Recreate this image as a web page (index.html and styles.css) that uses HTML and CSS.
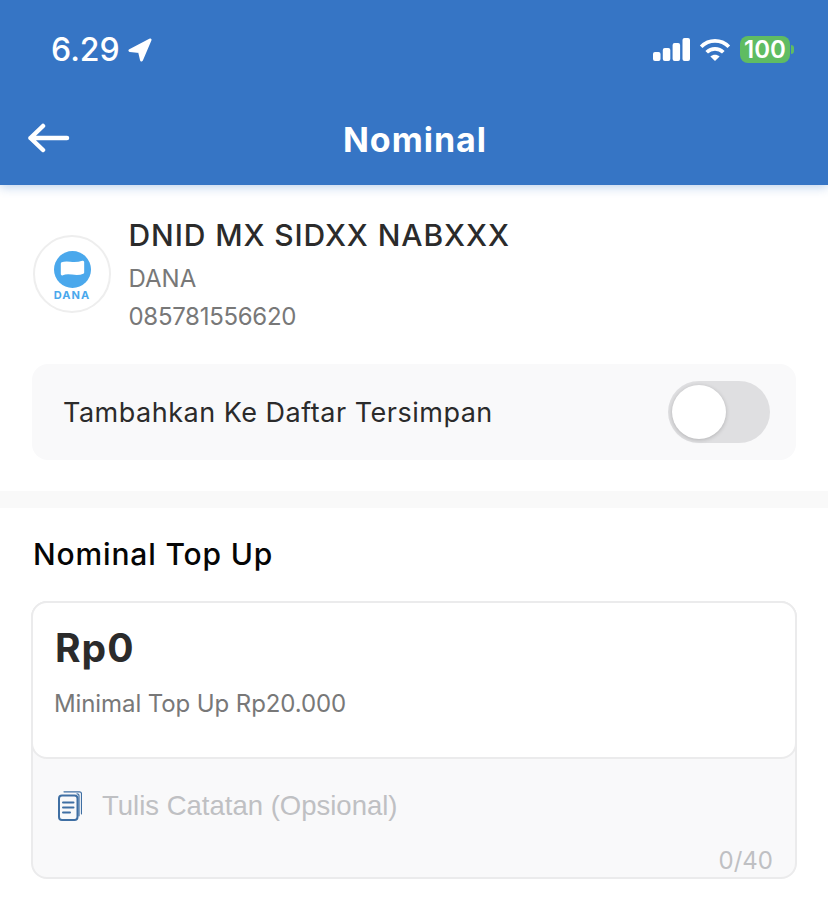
FILE: index.html
```html
<!DOCTYPE html>
<html lang="en">
<head>
  <meta charset="UTF-8" />
  <meta name="viewport" content="width=device-width, initial-scale=1.0"/>
  <title>Nominal</title>
  <link rel="stylesheet" href="styles.css">
</head>
<body>
  <header class="header">
    <div class="status">
      <div class="status-left">
        <span class="time">6.29</span>
        <svg width="24" height="24" viewBox="0 0 24 24"><path d="M22 2 2 12.500 11.500 13.500 13.500 22z" fill="#fff" stroke="#fff" stroke-width="3" stroke-linejoin="round"/></svg>
      </div>
      <div class="status-right">
        <svg width="37" height="23" viewBox="0 0 37 23"><g fill="#fff"><rect x="0" y="14" width="7.500" height="9" rx="2"/><rect x="9.800" y="10" width="7.500" height="13" rx="2"/><rect x="19.600" y="5" width="7.500" height="18" rx="2"/><rect x="29.500" y="0" width="7.500" height="23" rx="2"/></g></svg>
        <svg width="32" height="24" viewBox="0 0 34 26"><g fill="none" stroke="#fff" stroke-width="4"><path d="M2 9.500C10.500 1 23.500 1 32 9.500"/><path d="M8 15.500c5-5 13-5 18 0"/></g><path d="M17 25l-5-5c3-2.500 7-2.500 10 0z" fill="#fff"/></svg>
        <div class="battery"><span class="battery-level">100</span><span class="battery-tip"></span></div>
      </div>
    </div>
    <div class="appbar">
      <svg class="back" width="44" height="34" viewBox="0 0 44 34"><path d="M2.500 17h36.500M15 5 2.500 17 15 29" fill="none" stroke="#fff" stroke-width="4.500" stroke-linecap="round" stroke-linejoin="round"/></svg>
      <h1>Nominal</h1>
    </div>
  </header>

  <section class="account">
    <div class="contact">
      <div class="logo">
        <svg width="37" height="37" viewBox="0 0 38 38"><circle cx="19" cy="19" r="19" fill="#4aa8ec"/><path d="M8.500 13c6-2.500 10.500 2 21-1.500v10.500c-8 3.500-13.500-2-21 1.500z" fill="#fff" stroke="#fff" stroke-width="3" stroke-linejoin="round"/></svg>
        <span class="logo-text">DANA</span>
      </div>
      <div class="contact-info">
        <div class="contact-name">DNID MX SIDXX NABXXX</div>
        <div class="contact-sub">DANA</div>
        <div class="contact-sub contact-phone">085781556620</div>
      </div>
    </div>
    <div class="save-row">
      <span>Tambahkan Ke Daftar Tersimpan</span>
      <div class="toggle"><div class="knob"></div></div>
    </div>
  </section>

  <div class="divider"></div>

  <section class="topup">
    <h2>Nominal Top Up</h2>
    <div class="amount-box">
      <div class="amount-card">
        <div class="amount">Rp0</div>
        <div class="amount-hint">Minimal Top Up Rp20.000</div>
      </div>
      <div class="note">
        <div class="note-row">
          <svg width="24" height="30" viewBox="0 0 24 30"><g fill="none" stroke="#3f6fa3" stroke-linecap="round"><path d="M6 .8h15.500c1.300 0 2 .7 2 2v20" stroke-width="1.200"/><path d="M19 2.800c1.300 0 2 .7 2 2v20" stroke-width="1.200"/><rect x="1" y="4.500" width="18.500" height="24.500" rx="3" stroke-width="2" fill="#f9f9fa"/><path d="M5 11.500h10.500M5 16.500h10.500M5 21.500h7" stroke-width="2"/></g></svg>
          <span class="note-text">Tulis Catatan (Opsional)</span>
        </div>
        <div class="note-count">0/40</div>
      </div>
    </div>
  </section>
</body>
</html>
```

FILE: styles.css
```css
* {
  box-sizing: border-box;
}

body {
  margin: 0;
  background: #fff;
  font-family: Inter, 'Noto Sans', sans-serif;
  color: #2b2b2b;
}

.header {
  height: 185px;
  background: #3675c5;
  box-shadow: 0 2px 10px #3675c555;
  color: #fff;
  padding: 0 34px 0 28px;
}

.status {
  height: 100px;
  display: flex;
  justify-content: space-between;
  align-items: flex-start;
  padding-top: 32px;
}

.status-left {
  display: flex;
  align-items: center;
  gap: 8px;
  padding-left: 23px;
}

.time {
  font-size: 32px;
  font-weight: 500;
  line-height: 36px;
}

.status-right {
  display: flex;
  align-items: center;
  gap: 9px;
  padding-top: 4px;
}

.battery {
  display: flex;
  align-items: center;
  gap: 1px;
}

.battery-level {
  width: 50px;
  height: 27px;
  background: #5fbc62;
  border-radius: 8px;
  font-size: 24px;
  font-weight: 600;
  line-height: 27px;
  text-align: center;
}

.battery-tip {
  width: 3px;
  height: 9px;
  background: #5fbc62;
  border-radius: 0 3px 3px 0;
}

.appbar {
  position: relative;
  height: 78px;
  display: flex;
  align-items: center;
  justify-content: center;
}

.back {
  position: absolute;
  left: 0;
  top: 21px;
}

h1 {
  margin: 0 0 0 8px;
  font-size: 34px;
  font-weight: 700;
  letter-spacing: 1px;
}

.account {
  padding: 30px 32px 31px;
}

.contact {
  display: flex;
  align-items: flex-start;
  gap: 18px;
  padding-left: 1px;
}

.logo {
  width: 78px;
  height: 78px;
  margin-top: 20px;
  border: 2px solid #eeeeee;
  border-radius: 50%;
  display: flex;
  flex-direction: column;
  align-items: center;
  padding-top: 14px;
}

.logo-text {
  color: #4aa8ec;
  font-size: 11px;
  font-weight: 700;
  letter-spacing: 1px;
  line-height: 14px;
}

.contact-info {
  margin-left: -0.5px;
}

.contact-name {
  font-size: 30px;
  font-weight: 500;
  letter-spacing: 0.9px;
  line-height: 40px;
  margin-bottom: 5px;
}

.contact-sub {
  color: #787878;
  font-size: 24px;
  line-height: 38px;
}

.contact-phone {
  letter-spacing: -0.3px;
}

.save-row {
  height: 96px;
  margin-top: 28px;
  background: #f9f9fa;
  border-radius: 16px;
  padding: 0 26px 0 31px;
  display: flex;
  align-items: center;
  justify-content: space-between;
  font-size: 27px;
  letter-spacing: 0.5px;
}

.toggle {
  width: 102px;
  height: 62px;
  background: #dfdfe1;
  border-radius: 31px;
  padding: 4px;
}

.knob {
  width: 54px;
  height: 54px;
  background: #fff;
  border-radius: 50%;
  box-shadow: 0 1px 4px #0003;
}

.divider {
  height: 17px;
  background: #f9f9f9;
}

.topup {
  padding: 27px 31px 0;
}

h2 {
  margin: 0 0 0 2px;
  color: #050505;
  font-size: 30px;
  font-weight: 500;
  letter-spacing: 0.85px;
  line-height: 38px;
}

.amount-box {
  margin-top: 28px;
  background: #f9f9fa;
  border: 2px solid #ebebec;
  border-radius: 16px;
  height: 278px;
}

.amount-card {
  height: 158px;
  margin: -2px;
  background: #fff;
  border: 2px solid #ebebec;
  border-radius: 16px;
  padding: 21px 21px;
}

.amount {
  font-size: 39px;
  font-weight: 700;
  letter-spacing: 1px;
  line-height: 48px;
  padding-left: 1px;
}

.amount-hint {
  color: #787878;
  font-size: 24px;
  letter-spacing: -0.1px;
  line-height: 30px;
  margin-top: 17px;
}

.note {
  padding: 33px 22px 0 25px;
}

.note-row {
  display: flex;
  align-items: center;
  gap: 20px;
}

.note-text {
  color: #bfc0c3;
  font-family: 'Liberation Sans', sans-serif;
  font-size: 27.5px;
}

.note-count {
  color: #bfc0c3;
  font-size: 24px;
  line-height: 29px;
  text-align: right;
  margin-top: 24px;
}
```
